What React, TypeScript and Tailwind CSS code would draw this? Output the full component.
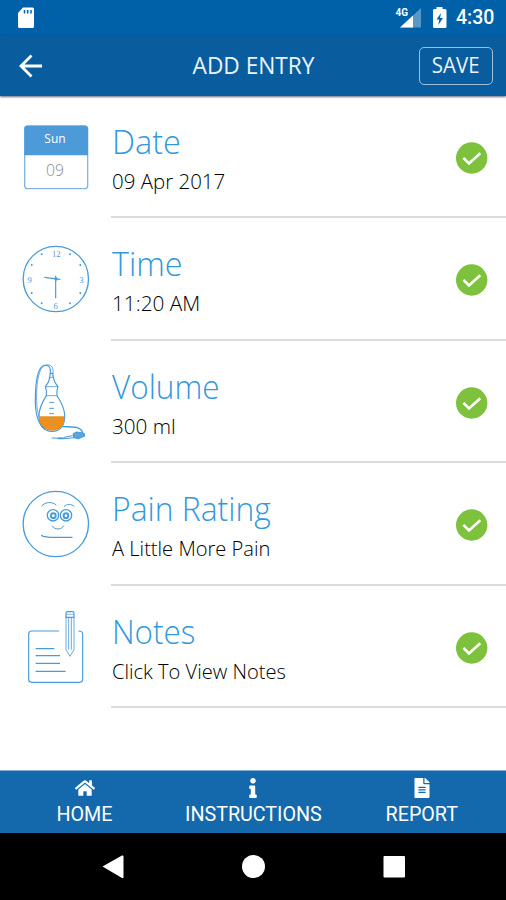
import type { ReactNode } from "react";
import { FaHome, FaInfo, FaFileAlt } from "react-icons/fa";

const BLUE = "#4a9bdb";

function CalendarIcon() {
  return (
    <svg width="112" height="122" viewBox="-30 -43 336 366" fill="none">
      <rect x="44" y="47" width="189" height="188" rx="9" fill="#fff" stroke="#86b3e2" strokeWidth="4" />
      <path d="M43 135V56q0-10 10-10H224q10 0 10 10V135Z" fill="#4c9bd8" />
      <text x="135" y="98" textAnchor="middle" fontSize="38" fill="#fff" className="font-['Open_Sans',sans-serif] font-normal" textLength="64" lengthAdjust="spacingAndGlyphs">Sun</text>
      <text x="135" y="197" textAnchor="middle" fontSize="47" fill="#8c8c8c" className="font-['Open_Sans',sans-serif] font-light" textLength="54" lengthAdjust="spacingAndGlyphs">09</text>
    </svg>
  );
}

function ClockIcon() {
  const dots = [[95, 58], [180, 58], [65, 90], [211, 90], [65, 174], [211, 174], [95, 205], [180, 205]];
  return (
    <svg width="112" height="122" viewBox="-30 -51 336 366" fill="none" stroke={BLUE}>
      <circle cx="137.500" cy="132" r="98" strokeWidth="4" />
      {dots.map(([x, y]) => (
        <circle key={x + "-" + y} cx={x} cy={y} r="3" fill={BLUE} stroke="none" />
      ))}
      <path d="M137 122V190M103 127l48 6" strokeWidth="3.500" />
      <circle cx="138" cy="132" r="5" fill={BLUE} stroke="none" />
      <g fill={BLUE} stroke="none" fontSize="26" textAnchor="middle" className="font-['Liberation_Serif',serif]">
        <text x="139" y="66">12</text>
        <text x="214" y="144">3</text>
        <text x="137" y="221">6</text>
        <text x="59" y="144">9</text>
      </g>
    </svg>
  );
}

function BottleIcon() {
  return (
    <svg width="112" height="122" viewBox="-30 -44 336 366" fill="none" stroke={BLUE} strokeWidth="3.500" strokeLinecap="round" strokeLinejoin="round">
      <path d="M121 53c-3 22-5 28-15 40 3 8 5 18 3 27-10 17-22 34-22 60 0 29 14 47 39 47s39-18 38-47c0-26-13-43-23-60-2-9 0-19 3-27-10-12-13-18-16-40Z" />
      <path d="M89 182H162C167 207 152 225 126 225S84 207 89 182Z" fill="#ef8f1c" stroke="none" />
      <path d="M121 53V42c-2-17-23-16-31-2-13 23-14 65-14 95 0 32 8 67 26 84" />
      <path d="M129 53V40c-4-18-29-16-36 0-12 24-14 65-13 95 0 20 3 34 7 48" strokeWidth="2.500" />
      <path d="M120 65h11M109 93h34M111 120h29" strokeWidth="2.500" />
      <path d="M119 140h12M119 158h12M119 174h12" strokeWidth="3" />
      <path d="M119 188h12M119 205h12" stroke="#b59a72" strokeWidth="3" />
      <path d="M158 213c22 1 36-2 49 5 8 4 11 8 10 15" strokeWidth="4" />
      <path d="M190 234l10-5 22 4 2 8-20 8-13-4Z" fill="#5ba4dd" />
      <path d="M187 240l-24 5M193 246l-30 3M126 247l32 1" strokeWidth="3" />
      <path d="M145 248h16" strokeWidth="5" />
    </svg>
  );
}

function FaceIcon() {
  return (
    <svg width="112" height="122" viewBox="-30 -51 336 366" fill="none" stroke={BLUE} strokeWidth="4" strokeLinecap="round">
      <circle cx="137.500" cy="132" r="98" />
      <path d="M95 78c11-13 32-14 43-3M163 79c8-8 21-8 29 0" strokeWidth="3" />
      <circle cx="129" cy="106" r="17" />
      <circle cx="168" cy="106" r="17" />
      <circle cx="130" cy="107" r="7" strokeWidth="6" />
      <circle cx="168" cy="107" r="7" strokeWidth="6" />
      <path d="M127 138c6 12 28 12 34 0" strokeWidth="3" />
      <path d="M95 166l4 3 21 3h66" />
    </svg>
  );
}

function NotesIcon() {
  return (
    <svg width="112" height="122" viewBox="-30 -44 336 366" fill="none" stroke={BLUE} strokeWidth="3.500">
      <path d="M147 91H65q-9 0-9 9V236q0 9 9 9H209q9 0 9-9V100q0-9-13-9" />
      <path d="M77 144h56M77 165h73M77 188h73M77 212h90" strokeWidth="4" />
      <path d="M168 48V147l12 20 12-20V48M176 50V147M184 50V147" strokeWidth="2.500" />
      <path d="M168 50V38q0-5 5-5h14q5 0 5 5V50Z" />
      <path d="M168 41h24" strokeWidth="2" />
    </svg>
  );
}

function Check() {
  return (
    <svg width="32" height="32" viewBox="0 0 32 32" fill="none">
      <circle cx="15.700" cy="16" r="15.700" fill="#7dc13c" />
      <path d="M7.400 15.800l5.600 5.700L24.300 11.300" stroke="#fff" strokeWidth="2.600" />
    </svg>
  );
}

type Entry = { title: string; value: string; icon: ReactNode; titleFit: string; valueFit: string };

const entries: Entry[] = [
  { title: "Date", value: "09 Apr 2017", icon: <CalendarIcon />, titleFit: "scale-x-[0.985]", valueFit: "scale-x-[0.975]" },
  { title: "Time", value: "11:20 AM", icon: <ClockIcon />, titleFit: "scale-x-[0.98]", valueFit: "scale-x-[0.99]" },
  { title: "Volume", value: "300 ml", icon: <BottleIcon />, titleFit: "scale-x-[0.955]", valueFit: "scale-x-[0.985]" },
  { title: "Pain Rating", value: "A Little More Pain", icon: <FaceIcon />, titleFit: "scale-x-[0.965]", valueFit: "scale-x-[0.957]" },
  { title: "Notes", value: "Click To View Notes", icon: <NotesIcon />, titleFit: "scale-x-[0.95]", valueFit: "scale-x-[0.957]" },
];

function EntryRow({ title, value, icon, titleFit, valueFit }: Entry) {
  return (
    <div className="flex h-[122.4px]">
      <div className="w-[111px] flex-none">{icon}</div>
      <div className="flex flex-1 border-b-2 border-[#dcdcdc]">
        <div className="flex-1 pt-[25px] pl-px whitespace-nowrap font-light">
          <div className={`w-max origin-left text-[33px] leading-[42px] text-[#3398dc] ${titleFit}`}>{title}</div>
          <div className={`w-max origin-left text-[21px] leading-[36px] text-black ${valueFit}`}>{value}</div>
        </div>
        <div className="pt-[46px] pr-[18px]">
          <Check />
        </div>
      </div>
    </div>
  );
}

function StatusBar() {
  return (
    <div className="flex h-9 items-center bg-[#0060a8] pl-[17px] pr-[10px] text-white">
      <svg width="18" height="22" viewBox="0 0 18 22">
        <path d="M6 .5H15.500q1.500 0 1.500 1.500V19.500q0 1.500-1.500 1.500H2.500Q1 21 1 19.500V6Z" fill="#fff" />
        <path d="M7.500 3v3.500M10.700 3v3.500M14 3v3.500" stroke="#0060a8" strokeWidth="1.500" />
      </svg>
      <svg className="ml-auto" width="27" height="24" viewBox="0 0 27 24">
        <path d="M26 2V21.500H5Z" fill="#5698c8" />
        <path d="M18 9.500V21.500H5Z" fill="#fff" />
        <text x="0.500" y="10" fontSize="11" fill="#fff" className="font-['Roboto',sans-serif] font-bold" textLength="12.500" lengthAdjust="spacingAndGlyphs">4G</text>
      </svg>
      <svg className="ml-[10px]" width="16" height="24" viewBox="0 0 16 24">
        <path d="M4.500 3V1h6v2H13q1.500 0 1.500 1.500V20.500q0 1.500-1.500 1.500H2.500Q1 22 1 20.500V4.500Q1 3 2.500 3Z" fill="#fff" />
        <path d="M9 7L4.500 13.500H7.300L6.300 19L11 12H8Z" fill="#0060a8" />
      </svg>
      <span className="ml-[8px] w-[40px] font-['Roboto',sans-serif] text-[19.5px] font-medium leading-none">4:30</span>
    </div>
  );
}

function AppBar() {
  return (
    <div className="relative z-10 flex h-[60px] items-center bg-[#095c9d] pb-px pl-[18px] pr-[13px] text-[#eaf3fb] shadow-[0_1px_2px_rgba(0,0,40,0.6)]">
      <svg className="flex-none" width="26" height="26" viewBox="0 0 26 26" fill="none" stroke="#fff" strokeWidth="2.800">
        <path d="M24 13H3M13.500 2.500L3 13L13.500 23.500" />
      </svg>
      <div className="flex-1 pb-[2px] pl-[44px] text-center text-[24px] leading-none">
        <span className="inline-block scale-x-[0.945]">ADD ENTRY</span>
      </div>
      <button className="flex h-[38px] w-[74px] items-center justify-center rounded-[5px] border-[1.5px] border-[#9dbfdc] pb-[4px] text-[22px] leading-none">
        <span className="inline-block scale-x-[0.93]">SAVE</span>
      </button>
    </div>
  );
}

const tabs = [
  { label: "HOME", Icon: FaHome },
  { label: "INSTRUCTIONS", Icon: FaInfo },
  { label: "REPORT", Icon: FaFileAlt },
];

export default function App() {
  return (
    <div className="flex h-[900px] w-[506px] flex-col overflow-hidden bg-white font-['Open_Sans',sans-serif]">
      <StatusBar />
      <AppBar />
      <main className="flex-1">
        {entries.map((e) => (
          <EntryRow key={e.title} {...e} />
        ))}
      </main>
      <nav className="grid h-[63px] grid-cols-3 border-t border-[#86add6] bg-[#1469ac] font-['Roboto',sans-serif] text-white">
        {tabs.map(({ label, Icon }) => (
          <div key={label} className="flex flex-col items-center pt-[7px] pl-px">
            <Icon size={20} />
            <span className="mt-[5px] scale-x-[0.985] text-[20px] leading-[22px]">{label}</span>
          </div>
        ))}
      </nav>
      <div className="flex h-[67px] items-center bg-black">
        <svg width="506" height="67" viewBox="0 0 506 67" fill="#fff">
          <path d="M102.500 33.500L122 22.500q1.500-.5 1.500 1V44q0 1.500-1.500 1Z" />
          <circle cx="253.500" cy="33.500" r="11.500" />
          <rect x="383.500" y="23" width="21.500" height="21.500" rx="1" />
        </svg>
      </div>
    </div>
  );
}
